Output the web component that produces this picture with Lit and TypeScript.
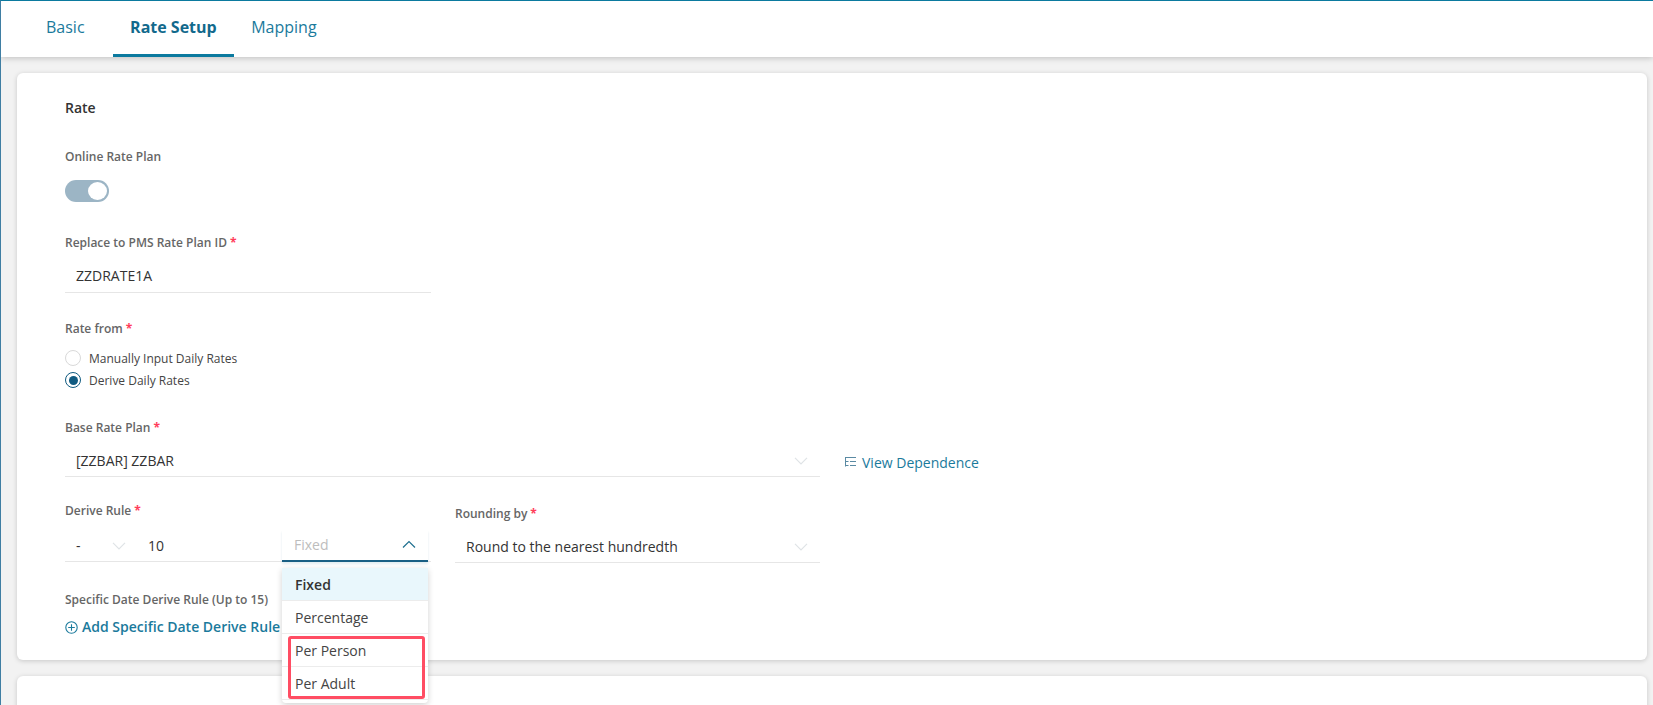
import { LitElement, html, css, svg } from "lit";
import { customElement } from "lit/decorators.js";

const chevron = (up = false) => html`<svg class="chev ${up ? "up" : ""}" width="14" height="8" viewBox="0 0 14 8" fill="none">
  ${up ? svg`<path d="M1 7.5 L7 1.5 L13 7.5" stroke="#1f6f8f" stroke-width="1.2"/>` : svg`<path d="M1 .8 L7 6.8 L13 .8" stroke="#dfe3e6" stroke-width="1.2"/>`}
</svg>`;

@customElement("app-root")
export class AppRoot extends LitElement {
  static styles = css`
    :host { display: block; height: 705px; overflow: hidden; font-family: "Open Sans", sans-serif; background: #f2f2f2; box-sizing: border-box; border-left: 1px solid #3f7ea3; border-top: 1px solid #0b7a9f; color: #333; }
    * { box-sizing: border-box; }
    .tabs { height: 56px; background: #fff; display: flex; padding-left: 27px; box-shadow: 0 1px 6px rgba(0,0,0,.22); position: relative; z-index: 1; }
    .tab { font-size: 16px; color: #1a7a9c; padding: 0 18px; height: 56px; line-height: 53px; border-bottom: 3px solid transparent; }
    .tab.first { margin-right: 10px; }
    .tab.active { font-weight: 700; color: #12698c; border-bottom-color: #0b7a9f; padding: 0 17.5px; }
    .tab.last { padding-left: 17px; }
    .page { padding: 16px 6px 0 16px; display: flex; flex-direction: column; gap: 16px; }
    .card { background: #fff; border-radius: 6px; box-shadow: 0 1px 5px rgba(0,0,0,.18); }
    .main { height: 587px; padding: 26px 48px 0; position: relative; }
    .next { height: 60px; }
    .title { font-size: 14px; font-weight: 600; line-height: 18px; color: #333; }
    .label { font-size: 12px; font-weight: 600; color: #666; line-height: 16px; }
    .req { color: #ff3d5a; margin-left: 3px; font-weight: 700; }
    .m1 { margin-top: 32px; }
    .toggle { width: 44px; height: 22px; border-radius: 11px; background: #9cb5c5; margin-top: 15px; padding: 2px; display: flex; justify-content: flex-end; }
    .knob { width: 19px; height: 18px; border-radius: 50%; background: #fff; }
    .m2 { margin-top: 33px; }
    .input { height: 34px; border-bottom: 1px solid #e6e6e6; font-size: 14px; color: #333; display: flex; align-items: center; padding: 0 12px 0 11px; justify-content: space-between; line-height: 34px; }
    .w1 { width: 366px; margin-top: 8px; }
    .m3 { margin-top: 28px; }
    .radios { margin-top: 13px; display: flex; flex-direction: column; gap: 6px; }
    .radio { display: flex; align-items: center; gap: 8px; font-size: 12px; height: 16px; color: #444; }
    .dot { width: 16px; height: 16px; border-radius: 50%; border: 1px solid #d9d9d9; flex: none; }
    .dot.on { border: 1.5px solid #0f5a80; position: relative; }
    .dot.on::after { content: ""; position: absolute; inset: 2.5px; border-radius: 50%; background: #0f5a80; }
    .m4 { margin-top: 32px; }
    .baseRow { display: flex; align-items: flex-end; margin-top: 7px; }
    .w2 { width: 755px; padding-top: 2px; }
    .link { font-size: 14px; color: #1a7a9c; display: flex; align-items: center; gap: 6px; margin-left: 25px; height: 34px; padding-top: 4px; }
    .m5 { margin-top: 26px; display: flex; }
    .ruleCol { width: 366px; }
    .rule { display: flex; height: 32px; margin-top: 11px; border-bottom: 1px solid #e6e6e6; font-size: 14px; align-items: center; position: relative; }
    .minus { width: 47px; padding-left: 11px; }
    .ten { margin-left: 22px; flex: 1; padding-left: 0; }
    .fixed { position: absolute; left: 217px; right: 3px; top: 0; height: 32px; border-bottom: 2px solid #1a5f84; display: flex; align-items: center; justify-content: space-between; padding: 0 12px 2px 12px; color: #bdbdbd; box-shadow: 0 2px 2px rgba(26,95,132,.12); }
    .roundCol { margin-left: 24px; width: 365px; padding-top: 3px; }
    .round { margin-top: 10px; height: 31px; }
    .m6 { margin-top: 29px; }
    .add { font-size: 14px; font-weight: 600; color: #1a7a9c; display: flex; align-items: center; gap: 4px; margin-top: 9px; line-height: 20px; }
    .menu { position: absolute; left: 265px; top: 495px; width: 146px; background: #fff; border-radius: 0 0 4px 4px; box-shadow: 0 2px 6px rgba(0,0,0,.18); z-index: 2; padding-bottom: 3px; font-size: 14px; }
    .opt { height: 33px; line-height: 33px; padding: 0 13px; border-bottom: 1px solid #ececec; color: #444; }
    .opt.sel { background: #e9f7fc; font-weight: 600; color: #333; }
    .hl { position: absolute; left: 6px; top: 68px; width: 137px; height: 63px; border: 3px solid #ff4d63; border-radius: 3px; }
  `;

  render() {
    return html`
      <div class="tabs">
        <div class="tab first">Basic</div>
        <div class="tab active">Rate Setup</div>
        <div class="tab last">Mapping</div>
      </div>
      <div class="page">
        <div class="card main">
          <div class="title">Rate</div>
          <div class="label m1">Online Rate Plan</div>
          <div class="toggle"><div class="knob"></div></div>
          <div class="label m2">Replace to PMS Rate Plan ID<span class="req">*</span></div>
          <div class="input w1">ZZDRATE1A</div>
          <div class="label m3">Rate from<span class="req">*</span></div>
          <div class="radios">
            <div class="radio"><span class="dot"></span>Manually Input Daily Rates</div>
            <div class="radio"><span class="dot on"></span>Derive Daily Rates</div>
          </div>
          <div class="label m4">Base Rate Plan<span class="req">*</span></div>
          <div class="baseRow">
            <div class="input w2"><span>[ZZBAR] ZZBAR</span>${chevron()}</div>
            <div class="link">
              <svg width="11" height="10" viewBox="0 0 11 10" fill="none" stroke="#5a8aa3" stroke-width="1">
                <path d="M0 .5h11M.5 .5v9M.5 4.5h3M5 4.5h6M.5 8.5h3M5 8.5h6"/>
              </svg>
              View Dependence
            </div>
          </div>
          <div class="m5">
            <div class="ruleCol">
              <div class="label">Derive Rule<span class="req">*</span></div>
              <div class="rule">
                <span class="minus">-</span>${chevron()}<span class="ten">10</span>
                <div class="fixed"><span>Fixed</span>${chevron(true)}</div>
              </div>
            </div>
            <div class="roundCol">
              <div class="label">Rounding by<span class="req">*</span></div>
              <div class="input round"><span>Round to the nearest hundredth</span>${chevron()}</div>
            </div>
          </div>
          <div class="label m6">Specific Date Derive Rule (Up to 15)</div>
          <div class="add">
            <svg width="13" height="13" viewBox="0 0 13 13" fill="none" stroke="#1a7a9c" stroke-width="1.1">
              <circle cx="6.5" cy="6.5" r="5.7"/><path d="M6.5 3.2v6.6M3.2 6.5h6.6"/>
            </svg>
            Add Specific Date Derive Rule
          </div>
          <div class="menu">
            <div class="opt sel">Fixed</div>
            <div class="opt">Percentage</div>
            <div class="opt">Per Person</div>
            <div class="opt">Per Adult</div>
            <div class="hl"></div>
          </div>
        </div>
        <div class="card next"></div>
      </div>
    `;
  }
}
